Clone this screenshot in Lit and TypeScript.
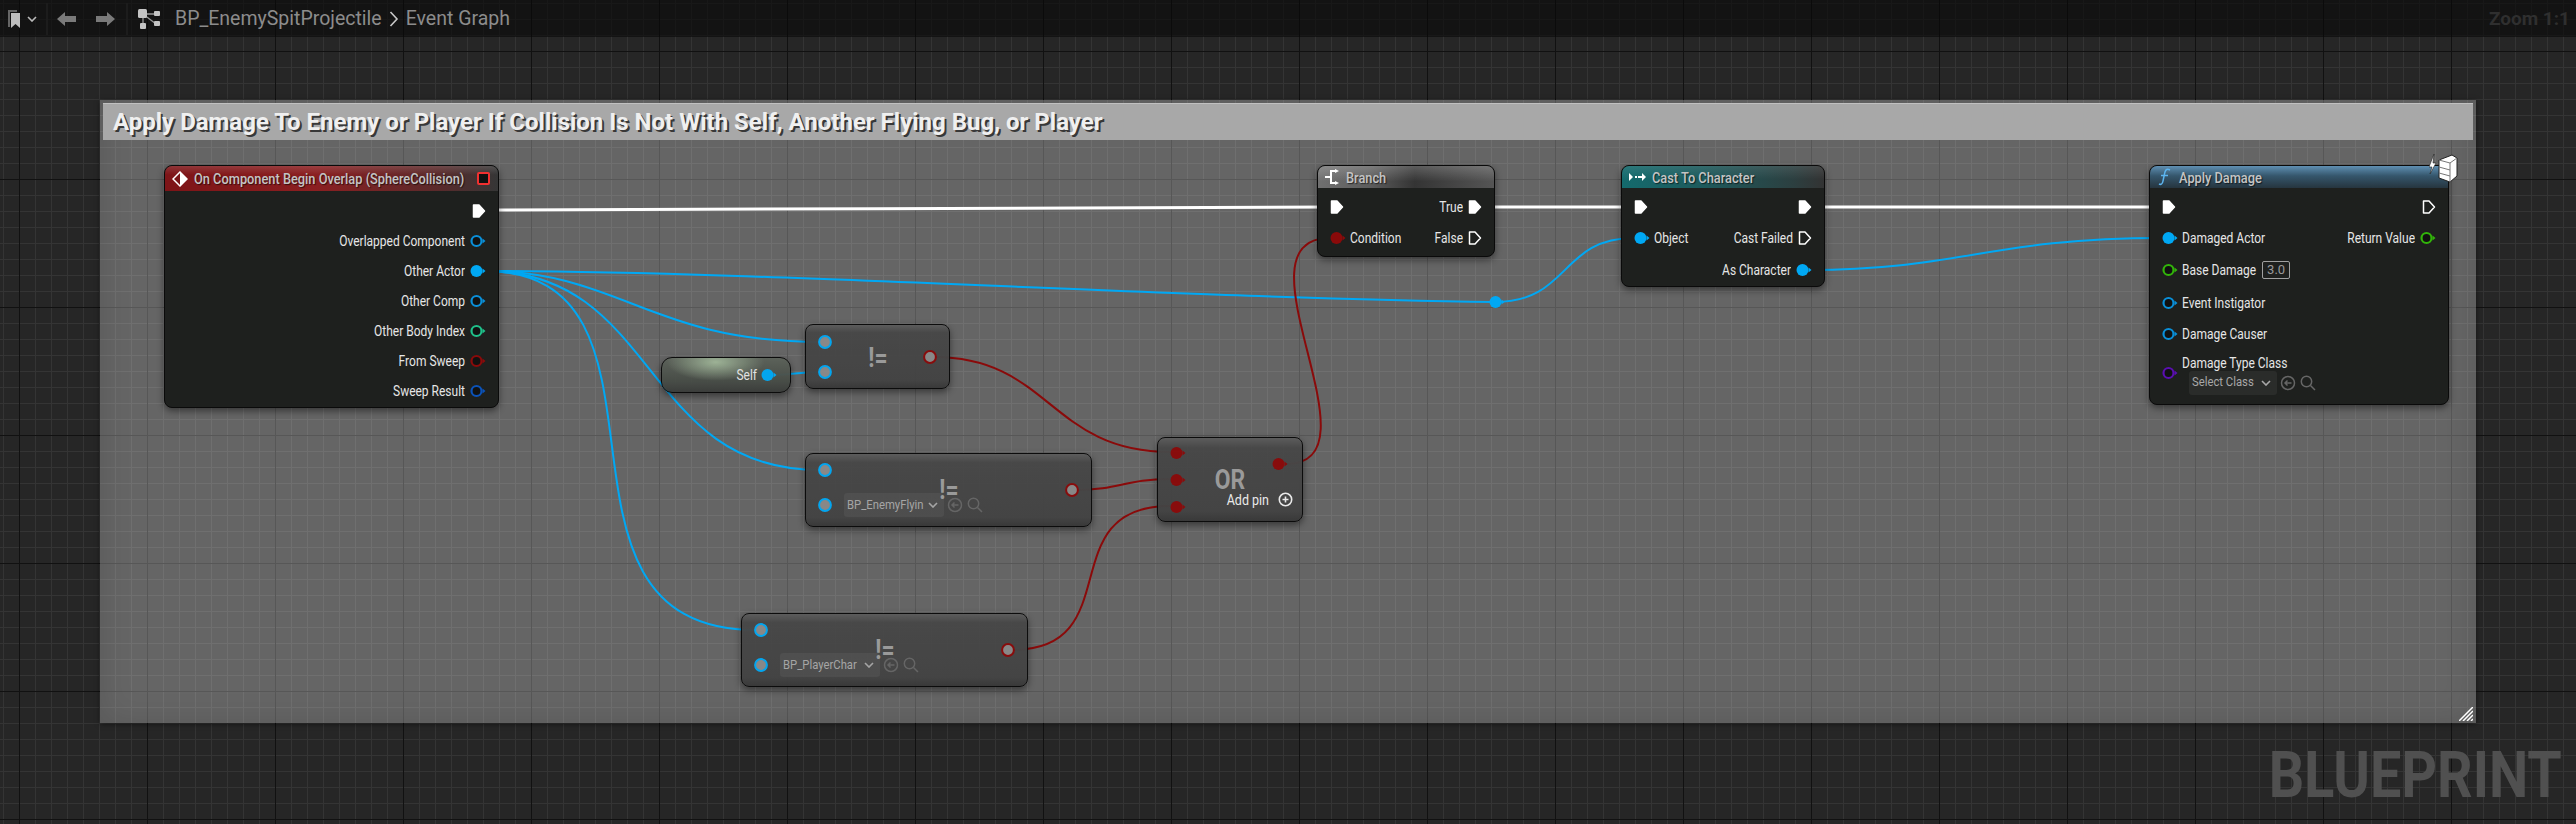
import {LitElement, css, html, svg} from 'lit';
import {customElement} from 'lit/decorators.js';

const BLUE = '#00a8f4';
const RED = '#8a0a0a';

// wires go under the nodes: [colour, width, path]
const wires: [string, number, string][] = [
  ['#fff', 3, 'M486 210 C800 210 1000 207 1330 207'],
  ['#fff', 3, 'M1488 207 L1632 207'],
  ['#fff', 3, 'M1812 207 L2160 207'],
  [BLUE, 2, 'M484 271 C760 271 1180 298 1495 302'],
  [BLUE, 2, 'M1495 302 C1570 302 1560 238 1634 238'],
  [BLUE, 2, 'M484 271 C620 271 650 342 820 342'],
  [BLUE, 2, 'M484 271 C660 271 640 470 820 470'],
  [BLUE, 2, 'M484 271 C700 271 520 630 756 630'],
  [BLUE, 2, 'M772 375 C795 375 795 372 820 372'],
  [BLUE, 2, 'M1808 270 C1960 270 1990 238 2162 238'],
  [RED, 2, 'M934 357 C1050 357 1050 452 1170 452'],
  [RED, 2, 'M1075 490 C1120 490 1125 479 1170 479'],
  [RED, 2, 'M1012 650 C1130 650 1050 506 1170 506'],
  [RED, 2, 'M1286 464 C1386 464 1228 238 1330 238'],
];

const pin = (kind: string, color = BLUE) => {
  if (kind === 'exec' || kind === 'execOpen') {
    return html`<svg class="pin" width="14" height="16" viewBox="0 0 14 16">
      <path d="M1.5 2 H7 L12.5 8 L7 14 H1.5 Z" fill=${kind === 'exec' ? '#fff' : 'none'} stroke="#fff" stroke-width="1.5" stroke-linejoin="round"/>
    </svg>`;
  }
  if (kind === 'pure') {
    return html`<svg class="pin" width="14" height="14" viewBox="0 0 14 14">
      <circle cx="7" cy="7" r="5.9" fill="#8a8a8a" stroke=${color} stroke-width="2"/>
    </svg>`;
  }
  return html`<svg class="pin" width="16" height="14" viewBox="0 0 16 14">
    <circle cx="6.5" cy="7" r=${kind === 'on' ? 6 : 5} fill=${kind === 'on' ? color : '#111'} stroke=${color} stroke-width=${kind === 'on' ? 0 : 2.2}/>
    <path d="M12.5 4.5 L15.5 7 L12.5 9.5 Z" fill=${color}/>
  </svg>`;
};

const chevron = svg`<path d="M1 1 L5 5 L9 1" fill="none" stroke="currentColor" stroke-width="1.6"/>`;

const picker = (label: string, w: number) => html`
  <span class="picker">
    <span class="combo" style="width:${w}px">
      <span class="combo-text">${label}</span>
      <svg width="10" height="6" viewBox="0 0 10 6">${chevron}</svg>
    </span>
    <svg width="18" height="18" viewBox="0 0 18 18" fill="none" stroke="#666" stroke-width="1.5">
      <circle cx="9" cy="9" r="6.5"/><path d="M12.5 9 H6 M8.5 6.5 L6 9 L8.5 11.5"/>
    </svg>
    <svg width="18" height="18" viewBox="0 0 18 18" fill="none" stroke="#666" stroke-width="1.5">
      <circle cx="7.5" cy="7.5" r="5.2"/><path d="M11.5 11.5 L16 16"/>
    </svg>
  </span>`;

const row = (h: number, ...content: unknown[]) => html`<div class="row" style="height:${h}px">${content}</div>`;

const label = (t: string) => html`<span class="label">${t}</span>`;

const at = (x: number, y: number, w: number, h: number) => `left:${x}px;top:${y}px;width:${w}px;height:${h}px`;

@customElement('app-root')
export class AppRoot extends LitElement {
  static styles = css`
    :host {
      display: block;
      position: relative;
      width: 2576px;
      height: 824px;
      overflow: hidden;
      font-family: Roboto, "Liberation Sans", sans-serif;
      background-color: #262626;
      background-image:
        linear-gradient(to right, #111 1px, transparent 1px),
        linear-gradient(to bottom, #111 1px, transparent 1px),
        linear-gradient(to right, #343434 1px, transparent 1px),
        linear-gradient(to bottom, #343434 1px, transparent 1px);
      background-size: 128px 128px, 128px 128px, 16px 16px, 16px 16px;
      background-position: 19px 51px, 19px 51px, 3px 3px, 3px 3px;
    }

    .toolbar {
      height: 37px;
      display: flex;
      align-items: center;
      box-sizing: border-box;
      padding-left: 8px;
      background: rgba(8, 8, 8, 0.62);
      color: #8c8c8c;
      font-size: 19.5px;
    }
    .sep { width: 2px; height: 32px; background: #1c1c1c; }
    .zoom {
      margin-left: auto;
      margin-right: 6px;
      font-size: 19px;
      font-weight: 700;
      color: #2f2f2f;
    }

    .wires { position: absolute; left: 0; top: 0; }

    .comment {
      position: absolute;
      box-sizing: border-box;
      padding: 3px;
      background: rgba(255, 255, 255, 0.295);
      box-shadow: 0 1px 5px rgba(0, 0, 0, 0.5), inset 0 0 32px rgba(0, 0, 0, 0.13);
    }
    .comment-title {
      height: 37px;
      display: flex;
      align-items: center;
      box-sizing: border-box;
      padding-left: 10px;
      background: #a8a8a8;
      border-top: 1px solid #c0c0c0;
      color: #f0f0f0;
      font-size: 24px;
      font-weight: 700;
      text-shadow: 2px 2px 0 #383838;
    }
    .grip { position: absolute; right: 3px; bottom: 2px; }

    .node {
      position: absolute;
      box-sizing: border-box;
      border: 1px solid #0a0a0a;
      border-radius: 8px;
      background: #1e201e;
      box-shadow: 0 3px 7px rgba(0, 0, 0, 0.45);
      color: #e6e6e6;
    }
    .head {
      display: flex;
      align-items: center;
      gap: 6px;
      box-sizing: border-box;
      padding: 0 8px 0 7px;
      border-radius: 7px 7px 0 0;
      color: #c4c4c4;
      font-size: 12.8px;
      font-weight: 500;
      white-space: nowrap;
      text-shadow: 1px 1px 1px rgba(0, 0, 0, 0.6);
    }
    .head svg { flex: none; }
    .head-title { display: inline-block; transform: scaleY(1.15); }
    .head-event {
      height: 25px;
      background: linear-gradient(180deg, rgba(255, 255, 255, 0.14), transparent 35%),
        linear-gradient(90deg, #7d1417, #8b1f21 45%, #5a2a2b 82%, #353636);
    }
    .head-branch {
      height: 22px;
      background: linear-gradient(180deg, rgba(255, 255, 255, 0.2), transparent 70%),
        linear-gradient(90deg, #707070, #5c5c5c 30%, #343434 55%, #555 100%);
    }
    .head-cast {
      height: 22px;
      background: linear-gradient(180deg, rgba(255, 255, 255, 0.1), transparent 60%),
        linear-gradient(90deg, #146a6d, #1d5a5c 40%, #2c3f40 85%, #333);
    }
    .head-func {
      height: 22px;
      background: linear-gradient(180deg, #5f8fb2, #35566c 45%, #26353f),
        #2a3c48;
    }
    .stop {
      margin-left: auto;
      width: 13px;
      height: 13px;
      border: 2px solid #f23030;
      border-radius: 2px;
      background: #111;
      box-sizing: border-box;
    }
    .corner { position: absolute; right: -11px; top: -12px; }

    .body {
      display: flex;
      justify-content: space-between;
      padding: 3px 12px 0;
    }
    .col { display: flex; flex-direction: column; }
    .col-right { align-items: flex-end; }
    .row {
      display: flex;
      align-items: center;
      gap: 4px;
      white-space: nowrap;
    }
    .col-right .row { gap: 5px; }
    .pin { flex: none; display: block; }
    .label {
      display: inline-block;
      font-size: 12px;
      color: #e6e6e6;
      transform: scaleY(1.15);
    }
    .stack { display: flex; flex-direction: column; }
    .stack .picker { margin-left: 7px; }

    .value {
      box-sizing: border-box;
      height: 18px;
      margin-left: 2px;
      padding: 0 4px;
      display: flex;
      align-items: center;
      border: 1px solid #a0a0a0;
      border-radius: 2px;
      color: #9a9a9a;
      font-size: 13px;
    }

    .picker { display: inline-flex; align-items: center; gap: 2px; }
    .combo {
      box-sizing: border-box;
      height: 24px;
      display: flex;
      align-items: center;
      gap: 4px;
      padding: 0 6px 0 3px;
      border-radius: 3px;
      background: rgba(255, 255, 255, 0.055);
      color: #a8a8a8;
      font-size: 11.3px;
    }
    .combo svg { flex: none; }
    .combo-text {
      flex: 1;
      min-width: 0;
      overflow: hidden;
      white-space: nowrap;
      transform: scaleY(1.12);
    }

    .pure {
      background: linear-gradient(180deg, #5c5c5c, #484848 12%, #434343 88%, #383838);
      opacity: 0.97;
      color: #eee;
    }
    .pure-body {
      height: 100%;
      display: flex;
      justify-content: space-between;
      align-items: center;
      padding: 0 12px;
    }
    .tall-pins { padding-bottom: 5px; }
    .tall-pins .picker { margin-left: 8px; }
    .sym {
      position: absolute;
      transform: translate(-50%, -50%) scale(0.88, 1.08);
      color: #9c9c9c;
      font-size: 26px;
      font-weight: 700;
      line-height: 1;
      white-space: nowrap;
    }
    .self {
      background: radial-gradient(ellipse 38% 55% at 42% 12%, #9fb598, transparent),
        linear-gradient(180deg, #5c625a, #474c46 70%, #3a3c3a);
      border-radius: 11px;
    }
    .self .pure-body { justify-content: flex-end; padding-right: 13px; gap: 4px; }
    .or-body { padding-right: 9px; }
    .add { display: inline-block; color: #eee; font-size: 12.5px; transform: scaleY(1.15); }

    .knot { position: absolute; left: 1489px; top: 295px; }

    .watermark {
      position: absolute;
      right: 14px;
      top: 737px;
      color: #505050;
      font-size: 65px;
      font-weight: 700;
      line-height: 76px;
      transform: scaleX(0.855);
      transform-origin: right center;
    }
  `;

  comparison(x: number, y: number, w: number, h: number, rowH: number, second: unknown, symX: number, symY: number) {
    return html`<div class="node pure" style=${at(x, y, w, h)}>
      <div class="pure-body">
        <div class="col ${second ? 'tall-pins' : ''}">
          ${row(rowH, pin('pure'))}
          ${row(rowH, pin('pure'), second)}
        </div>
        ${pin('pure', RED)}
      </div>
      <span class="sym" style="left:${symX}px;top:${symY}px">!=</span>
    </div>`;
  }

  render() {
    return html`
      <div class="toolbar">
        <svg width="14" height="18" viewBox="0 0 14 18">
          <path d="M0 0 H9 V2 H2 V17 H0 Z" fill="#666"/>
          <path d="M3 3 H12 V18 L7.5 14 L3 18 Z" fill="#bdbdbd"/>
        </svg>
        <svg style="margin:0 9px 0 5px" width="10" height="6" viewBox="0 0 10 6" color="#bbb">${chevron}</svg>
        <div class="sep"></div>
        <svg style="margin-left:9px" width="19" height="14" viewBox="0 0 19 14"><path d="M0 7 L8 0 V4 H19 V10 H8 V14 Z" fill="#7a7a7a"/></svg>
        <svg style="margin-left:20px" width="19" height="14" viewBox="0 0 19 14"><path d="M19 7 L11 0 V4 H0 V10 H11 V14 Z" fill="#7a7a7a"/></svg>
        <div class="sep" style="margin-left:11px"></div>
        <svg style="margin:0 15px 0 10px" width="22" height="20" viewBox="0 0 22 20">
          <path d="M5 5 H18 M5 5 L18 15" stroke="#999" stroke-width="1.3"/>
          <path d="M5 5 V17" stroke="#999" stroke-width="1.3"/>
          <rect width="9" height="9" rx="1.5" fill="#c4c4c4"/>
          <rect x="16" y="2" width="6" height="5" rx="1" fill="#c4c4c4"/>
          <rect x="16" y="12" width="6" height="5" rx="1" fill="#c4c4c4"/>
          <rect x="2" y="14" width="6" height="6" rx="1" fill="#c4c4c4"/>
        </svg>
        <span>BP_EnemySpitProjectile</span>
        <svg style="margin:0 7px" width="10" height="18" viewBox="0 0 10 18"><path d="M1.5 2 L8 9 L1.5 16" fill="none" stroke="#c8c8c8" stroke-width="1.6"/></svg>
        <span>Event Graph</span>
        <span class="zoom">Zoom 1:1</span>
      </div>

      <div class="comment" style=${at(100, 100, 2376, 623)}>
        <div class="comment-title">Apply Damage To Enemy or Player If Collision Is Not With Self, Another Flying Bug, or Player</div>
        <svg class="grip" width="14" height="14" viewBox="0 0 14 14">
          <path d="M0 14 L14 0 M4 14 L14 4 M8 14 L14 8 M12 14 L14 12" stroke="#fff" stroke-width="1.5"/>
        </svg>
      </div>

      <svg class="wires" width="2576" height="824" fill="none">
        ${wires.map(([c, w, d]) => svg`<path d=${d} stroke=${c} stroke-width=${w}/>`)}
      </svg>

      <div class="node" style=${at(164, 165, 335, 243)}>
        <div class="head head-event">
          <svg width="16" height="16" viewBox="0 0 16 16">
            <path d="M8 1 L15 8 L8 15 L1 8 Z" fill="#7a1517" stroke="#fff" stroke-width="1.5"/>
            <path d="M8 1 L15 8 L8 15 Z" fill="#fff"/>
          </svg>
          <span class="head-title">On Component Begin Overlap (SphereCollision)</span>
          <span class="stop"></span>
        </div>
        <div class="body" style="justify-content:flex-end;padding-top:4px">
          <div class="col col-right">
            ${row(31, pin('exec'))}
            ${row(30, label('Overlapped Component'), pin('off', '#0a8fd8'))}
            ${row(30, label('Other Actor'), pin('on'))}
            ${row(30, label('Other Comp'), pin('off', '#0a8fd8'))}
            ${row(30, label('Other Body Index'), pin('off', '#1fc08a'))}
            ${row(30, label('From Sweep'), pin('off', RED))}
            ${row(30, label('Sweep Result'), pin('off', '#0b52b8'))}
          </div>
        </div>
      </div>

      <div class="node" style=${at(1317, 165, 178, 92)}>
        <div class="head head-branch">
          <svg width="15" height="16" viewBox="0 0 15 16" fill="none" stroke="#fff" stroke-width="2">
            <path d="M0 8 H6 M11 2 H6 V14 H11"/><path d="M10 0 L14 2 L10 4 Z M10 12 L14 14 L10 16 Z" fill="#fff" stroke-width="0"/>
          </svg>
          <span class="head-title">Branch</span>
        </div>
        <div class="body">
          <div class="col">
            ${row(31, pin('exec'))}
            ${row(31, pin('on', RED), label('Condition'))}
          </div>
          <div class="col col-right">
            ${row(31, label('True'), pin('exec'))}
            ${row(31, label('False'), pin('execOpen'))}
          </div>
        </div>
      </div>

      <div class="node" style=${at(1621, 165, 204, 122)}>
        <div class="head head-cast">
          <svg width="17" height="10" viewBox="0 0 17 10" fill="#fff">
            <path d="M0 1 L4 5 L0 9 Z M6 4 H8 V6 H6 Z M9 4 H13 V1 L17 5 L13 9 V6 H9 Z"/>
          </svg>
          <span class="head-title">Cast To Character</span>
        </div>
        <div class="body">
          <div class="col">
            ${row(31, pin('exec'))}
            ${row(31, pin('on'), label('Object'))}
          </div>
          <div class="col col-right">
            ${row(31, pin('exec'))}
            ${row(31, label('Cast Failed'), pin('execOpen'))}
            ${row(33, label('As Character'), pin('on'))}
          </div>
        </div>
      </div>

      <div class="node" style=${at(2149, 165, 300, 240)}>
        <div class="head head-func">
          <svg width="16" height="18" viewBox="0 0 16 18" fill="none" stroke="#5cb4ee" stroke-width="1.5">
            <path d="M13 2 C9 0 8 3 7.5 6 L6 13 C5.5 16 4 17 2 16 M4 7.5 H11"/>
          </svg>
          <span class="head-title">Apply Damage</span>
        </div>
        <svg class="corner" width="30" height="30" viewBox="0 0 30 30">
          <path d="M5 0 L0 13 H3 L1 20 L7 9 H4 Z" fill="#fff" stroke="#222" stroke-width="0.6"/>
          <path d="M10 6 L23 1 L28 4 V22 L21 28 L10 24 Z" fill="#fff" stroke="#222" stroke-width="1"/>
          <path d="M21 9 V28 M10 6 L21 9 L28 4 M10 13 L21 16 M10 19 L21 22" fill="none" stroke="#777" stroke-width="1"/>
        </svg>
        <div class="body">
          <div class="col">
            ${row(31, pin('exec'))}
            ${row(31, pin('on'), label('Damaged Actor'))}
            ${row(33, pin('off', '#32b40a'), label('Base Damage'), html`<span class="value">3.0</span>`)}
            ${row(33, pin('off', '#0a8fd8'), label('Event Instigator'))}
            ${row(30, pin('off', '#0a8fd8'), label('Damage Causer'))}
            ${row(48, pin('off', '#5a0fb0'), html`<div class="stack"><div>${label('Damage Type Class')}</div>${picker('Select Class', 88)}</div>`)}
          </div>
          <div class="col col-right">
            ${row(31, pin('execOpen'))}
            ${row(31, label('Return Value'), pin('off', '#32b40a'))}
          </div>
        </div>
      </div>

      <div class="node pure self" style=${at(661, 357, 130, 36)}>
        <div class="pure-body">${label('Self')}${pin('on')}</div>
      </div>

      ${this.comparison(805, 324, 145, 65, 30, '', 72, 32)}
      ${this.comparison(805, 453, 287, 74, 35, picker('BP_EnemyFlyin', 100), 143, 35)}
      ${this.comparison(741, 613, 287, 74, 35, picker('BP_PlayerChar', 100), 143, 35)}

      <div class="node pure" style=${at(1157, 437, 146, 85)}>
        <div class="pure-body or-body">
          <div class="col">
            ${row(27, pin('on', RED))}
            ${row(27, pin('on', RED))}
            ${row(27, pin('on', RED))}
          </div>
          <div class="col col-right" style="padding-top:4px">
            ${row(35, html`<span style="margin-right:5px">${pin('on', RED)}</span>`)}
            ${row(35, html`<span class="add">Add pin</span>`, html`
              <svg style="margin-left:4px" width="15" height="15" viewBox="0 0 15 15" fill="none" stroke="#eee" stroke-width="1.6">
                <circle cx="7.5" cy="7.5" r="6.2"/><path d="M4.5 7.5 H10.5 M7.5 4.5 V10.5"/>
              </svg>`)}
          </div>
        </div>
        <span class="sym" style="left:72px;top:41px">OR</span>
      </div>

      <svg class="knot" width="16" height="14" viewBox="0 0 16 14">
        <circle cx="6.5" cy="7" r="6" fill=${BLUE}/><path d="M12.5 4.5 L15.5 7 L12.5 9.5 Z" fill=${BLUE}/>
      </svg>

      <div class="watermark">BLUEPRINT</div>
    `;
  }
}
